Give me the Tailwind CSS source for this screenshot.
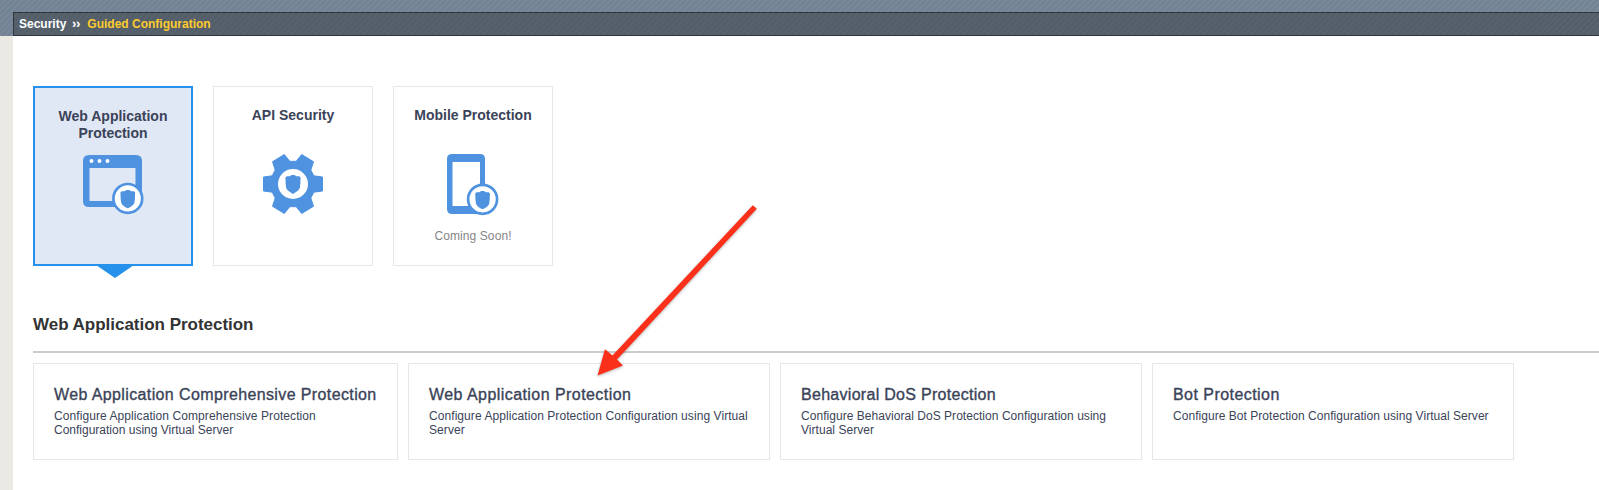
<!DOCTYPE html>
<html lang="en">
<head>
<meta charset="utf-8">
<title>Guided Configuration</title>
<script src="https://cdn.jsdelivr.net/npm/@tailwindcss/browser@4"></script>
</head>
<body class="relative h-[490px] overflow-hidden bg-white font-['Liberation_Sans',sans-serif] text-[#3a4358]">
<svg class="absolute size-0" aria-hidden="true">
  <symbol id="shield" viewBox="0 0 16 19"><path d="M6.500 0H9.500L11.300 1.300H14.300L15.700 2.800C15.300 4.500 15.400 6 15.400 8L14.900 12.500C14.500 15.200 11 17 8 19C5 17 1.500 15.200 1.100 12.500L.6 8C.6 6 .7 4.500 .3 2.800L1.700 1.300H4.700Z" fill="#4f92e0"/></symbol>
</svg>
<header class="h-9 bg-[#75879a] bg-[repeating-linear-gradient(135deg,#738395_0px,#738395_2.8px,#798a9b_2.8px,#798a9b_4.24px)] pt-3 pl-[13px]">
  <nav class="flex h-6 items-center border border-r-0 border-[#30363c] bg-[repeating-linear-gradient(135deg,#535e69_0px,#535e69_2.8px,#57636f_2.8px,#57636f_4.24px)] pl-[5px] text-xs font-bold text-white">
    <span>Security</span><span class="ml-[6px] w-[15px] [-webkit-text-stroke:0.2px]">››</span><span class="text-[#ffcb2d]">Guided Configuration</span>
  </nav>
</header>
<div class="flex h-[454px]">
  <aside class="w-[13px] shrink-0 bg-[#eae9e4]"></aside>
  <main class="min-w-0 flex-1 pt-[50px] pl-5">
    <section class="flex gap-5">
      <div class="relative flex h-[180px] w-40 flex-col items-center border-2 border-[#2691ea] bg-[#e0e7f5] pt-[20px]">
        <h3 class="text-center text-sm leading-[17px] font-bold">Web Application<br>Protection</h3>
        <svg class="mt-[13px] h-[60px] w-[61px] overflow-visible" viewBox="0 0 61 60">
          <path fill="#4f92e0" fill-rule="evenodd" d="M6 0H53Q59 0 59 6V46Q59 52 53 52H6Q0 52 0 46V6Q0 0 6 0ZM6.500 13V46H52.500V13Z"/>
          <g fill="#fff"><circle cx="8.500" cy="6" r="2"/><circle cx="16.500" cy="6" r="2"/><circle cx="24.500" cy="6" r="2"/></g>
          <circle cx="44.800" cy="43.400" r="14.400" fill="#fff" stroke="#4f92e0" stroke-width="2.700"/>
          <use href="#shield" x="36.800" y="35" width="16" height="18.500"/>
        </svg>
        <svg class="absolute top-[178px] left-[61px] h-[12px] w-[38px]" viewBox="0 0 38 12"><path d="M0 -1L19 12L38 -1Z" fill="#2691ea"/></svg>
      </div>
      <div class="flex h-[180px] w-40 flex-col items-center border border-[#e5e7ec] pt-[20px]">
        <h3 class="text-sm leading-[17px] font-bold">API Security</h3>
        <svg class="mt-[30px] size-[60px]" viewBox="0 0 60 60">
          <path fill="#4f92e0" stroke="#4f92e0" stroke-width="1" stroke-linejoin="round" d="M9.500 7.700L21.300 .5L26.800 7.300H33.200L38.700 .5L50.500 7.700L47.800 16L50.800 21.800L59.500 23V37L50.800 38.200L47.800 44L50.500 52.300L38.700 59.500L33.200 52.700H26.800L21.300 59.500L9.500 52.300L12.200 44L9.200 38.200L.5 37V23L9.200 21.800L12.200 16Z"/>
          <circle cx="30" cy="30" r="15" fill="#fff"/>
          <use href="#shield" x="22" y="21" width="16" height="19"/>
        </svg>
      </div>
      <div class="flex h-[180px] w-40 flex-col items-center border border-[#e5e7ec] pt-[20px]">
        <h3 class="text-sm leading-[17px] font-bold">Mobile Protection</h3>
        <svg class="mt-[30px] h-[61px] w-[52px] overflow-visible" viewBox="0 0 52 61">
          <path fill="#4f92e0" fill-rule="evenodd" d="M5 0H33Q38 0 38 5V55Q38 60 33 60H5Q0 60 0 55V5Q0 0 5 0ZM5.500 8V52H33V8Z"/>
          <circle cx="35.600" cy="45.300" r="14.500" fill="#fff" stroke="#4f92e0" stroke-width="2.700"/>
          <use href="#shield" x="27.600" y="37" width="16" height="18.500"/>
        </svg>
        <p class="mt-[14px] text-xs leading-[14px] tracking-[0.1px] text-[#858585]">Coming Soon!</p>
      </div>
    </section>
    <h2 class="mt-[49px] h-[36px] text-[17px] leading-5 font-bold tracking-[-0.02px] text-[#333]">Web Application Protection</h2>
    <div class="h-0.5 bg-[#ccc]"></div>
    <section class="mt-2.5 flex gap-2.5 text-xs leading-[14px] tracking-[0.04px]">
      <div class="h-[97px] w-[365px] shrink-0 border border-[#e5e7ec] px-5 pt-[21px]">
        <h4 class="mb-[4px] text-base leading-5 tracking-[0.38px] whitespace-nowrap [-webkit-text-stroke:0.35px]">Web Application Comprehensive Protection</h4>
        <p><span class="tracking-[0.08px]">Configure Application Comprehensive Protection</span><br><span class="tracking-[0px]">Configuration using Virtual Server</span></p>
      </div>
      <div class="h-[97px] w-[362px] shrink-0 border border-[#e5e7ec] px-5 pt-[21px]">
        <h4 class="mb-[4px] text-base leading-5 tracking-[0.44px] [-webkit-text-stroke:0.35px]">Web Application Protection</h4>
        <p class="tracking-[0.07px] whitespace-nowrap">Configure Application Protection Configuration using Virtual<br>Server</p>
      </div>
      <div class="h-[97px] w-[362px] shrink-0 border border-[#e5e7ec] px-5 pt-[21px]">
        <h4 class="mb-[4px] text-base leading-5 tracking-[0.29px] [-webkit-text-stroke:0.35px]">Behavioral DoS Protection</h4>
        <p>Configure Behavioral DoS Protection Configuration using<br>Virtual Server</p>
      </div>
      <div class="h-[97px] w-[362px] shrink-0 border border-[#e5e7ec] px-5 pt-[21px]">
        <h4 class="mb-[4px] text-base leading-5 tracking-[0.45px] [-webkit-text-stroke:0.35px]">Bot Protection</h4>
        <p>Configure Bot Protection Configuration using Virtual Server</p>
      </div>
    </section>
  </main>
</div>
<!-- Callout arrow over the page -->
<svg class="pointer-events-none absolute top-[190px] left-[580px] h-[200px] w-[190px] drop-shadow-[0px_1.5px_1.5px_rgba(0,0,0,0.3)]" viewBox="0 0 190 200">
  <path fill="#fb301a" d="M172.800 15.200L176.800 18.800L37 169.500L43 175.500L17.500 185.500L25 159.200L32.500 165.500Z"/>
</svg>
</body>
</html>
